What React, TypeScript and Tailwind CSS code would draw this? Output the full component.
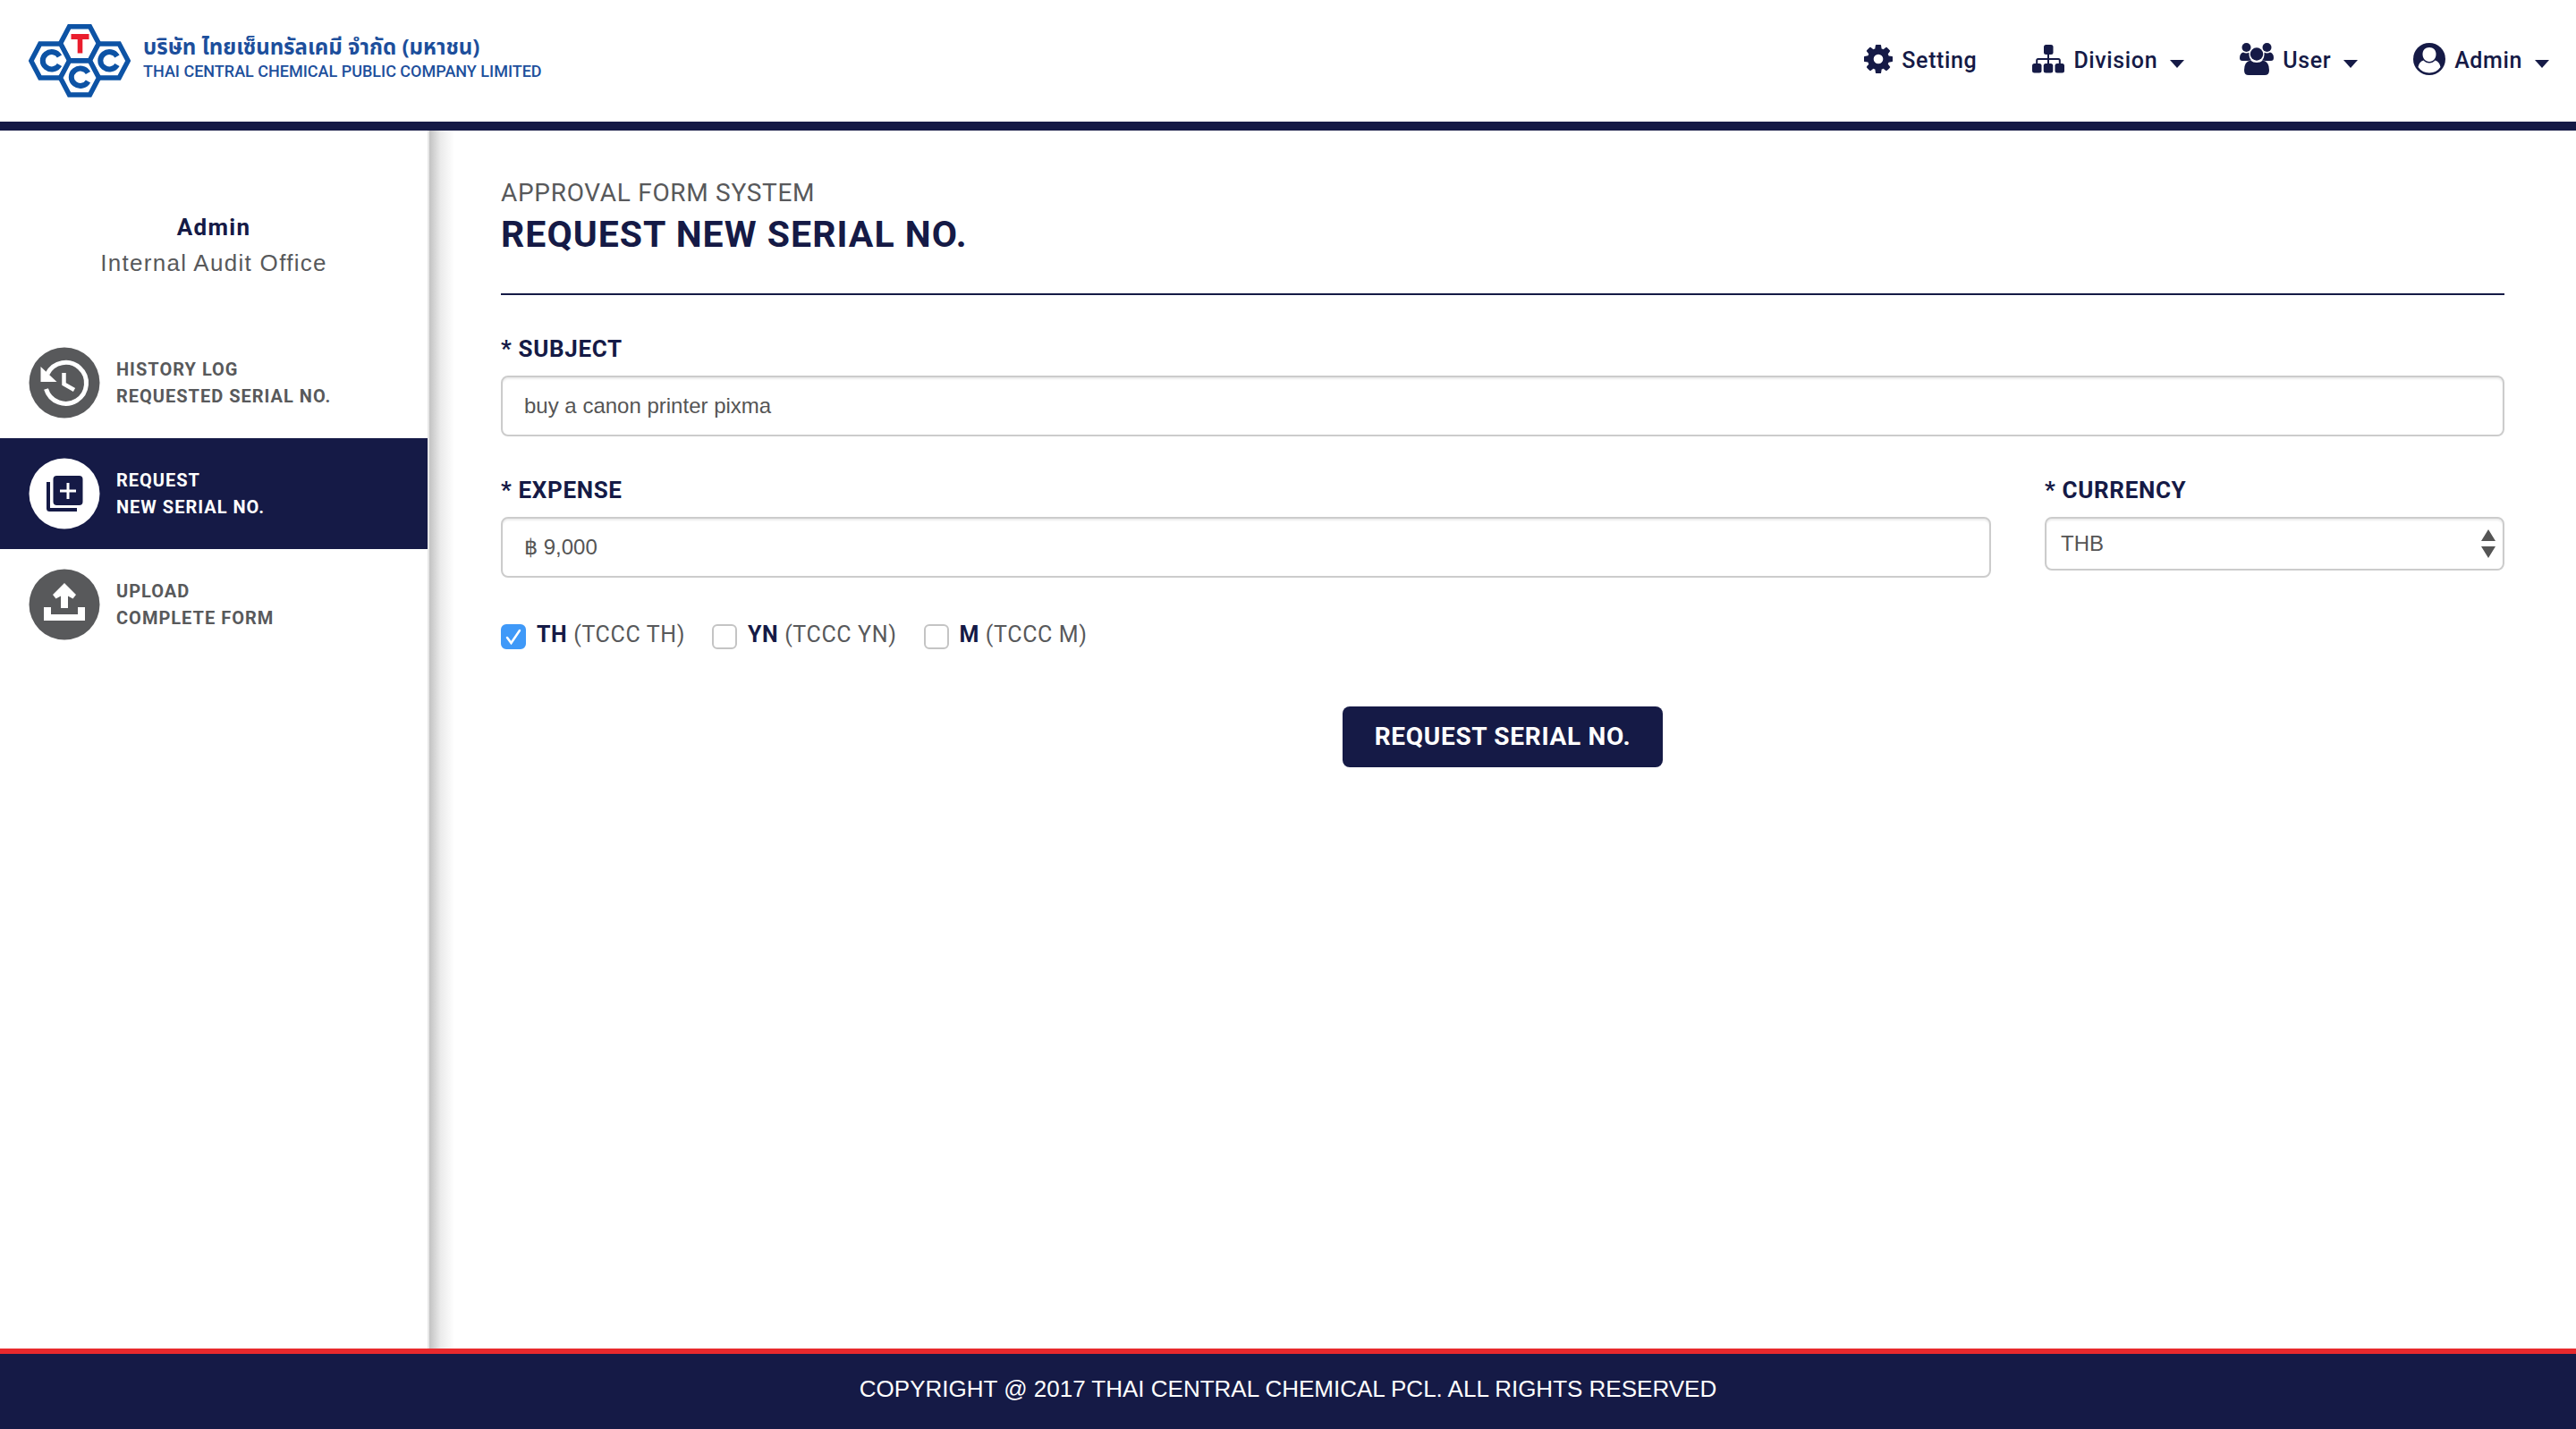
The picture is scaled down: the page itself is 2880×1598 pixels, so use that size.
import React from "react";

const NAVY = "#151a46";

function Caret() {
  return (
    <svg viewBox="0 0 16 10" className="mt-2 ml-1 h-[10px] w-4" fill="currentColor" aria-hidden="true">
      <path d="M0 0h16L8 9z" />
    </svg>
  );
}

function CogIcon() {
  return (
    <svg viewBox="0 0 1536 1536" className="mb-1 h-8 w-8" fill="currentColor" aria-hidden="true">
      <path d="M1024 768q0-106-75-181t-181-75-181 75-75 181 75 181 181 75 181-75 75-181zm512-109v222q0 12-8 23t-20 13l-185 28q-19 54-39 91 35 50 107 138 10 12 10 25t-9 23q-27 37-99 108t-94 71q-12 0-26-9l-138-108q-44 23-91 38-16 136-29 186-7 28-36 28H657q-14 0-24.500-8.500T621 1506l-28-184q-49-16-90-37l-141 107q-10 9-25 9-14 0-25-11-126-114-165-168-7-10-7-23 0-12 8-23 15-21 51-66.500t54-70.500q-27-50-41-99L29 913q-13-2-21-12.500T0 877V655q0-12 8-23t19-13l186-28q14-46 39-92-40-57-107-138-10-12-10-24 0-10 9-23 26-36 98.500-107.500T337 135q13 0 26 10l138 107q44-23 91-38 16-136 29-186 7-28 36-28h222q14 0 24.500 8.500T915 30l28 184q49 16 90 37l142-107q9-9 24-9 13 0 25 10 129 119 165 170 7 8 7 22 0 12-8 23-15 21-51 66.500t-54 70.500q26 50 41 98l183 28q13 2 21 12.500t8 23.500z" />
    </svg>
  );
}

function SitemapIcon() {
  return (
    <svg viewBox="0 0 36 32" className="mb-1 h-8 w-9" fill="currentColor" aria-hidden="true">
      <rect x="13" y="0" width="10.500" height="11" rx="2.500" />
      <rect x="0" y="21" width="10.500" height="10.500" rx="2.500" />
      <rect x="12.750" y="21" width="10.500" height="10.500" rx="2.500" />
      <rect x="25.500" y="21" width="10.500" height="10.500" rx="2.500" />
      <path d="M5.200 22v-4.500q0-1.500 1.500-1.500h22.600q1.500 0 1.500 1.500v4.500M18 10v12" fill="none" stroke="currentColor" strokeWidth="2" />
    </svg>
  );
}

function UsersIcon() {
  return (
    <svg viewBox="0 0 38 36" className="mb-1 h-9 w-[38px]" fill="currentColor" aria-hidden="true">
      <circle cx="7.500" cy="5" r="5" />
      <circle cx="30.500" cy="5" r="5" />
      <path d="M4 10.500q1.500 1 3.500 1 1.700 0 3-.7Q10 16 13 19.500q-2.500 0-4 .5H3q-3 0-3-3 0-5.500 4-6.500zM34 10.500q-1.500 1-3.500 1-1.700 0-3-.7Q28 16 25 19.500q2.500 0 4 .5h6q3 0 3-3 0-5.500-4-6.500z" />
      <circle cx="19" cy="12.500" r="7.200" />
      <path d="M12 19.500q3 2.500 7 2.500t7-2.500q7 1.500 7 11 0 5.500-5 5.500H10q-5 0-5-5.500 0-9.500 7-11z" />
    </svg>
  );
}

function UserCircleIcon() {
  return (
    <svg viewBox="0 0 36 36" className="mb-1 h-9 w-9" aria-hidden="true">
      <circle cx="18" cy="18" r="18" fill="currentColor" />
      <path d="M18 21c-4.500 0-7.500-4-7.500-8.500S13.500 5 18 5s7.500 3 7.500 7.500S22.500 21 18 21z" fill="#fff" />
      <path d="M11.500 19.500Q14 22.500 18 22.500t6.500-3q5 1.500 6 7.500Q26 33.500 18 33.500T5.500 27q1-6 6-7.500z" fill="#fff" />
    </svg>
  );
}

function Logo() {
  const hex = "M-11.500-19h23L21.500 0 11.500 19h-23L-21.500 0z";
  return (
    <svg viewBox="0 0 114 82" className="h-[82px] w-[114px] shrink-0" aria-label="TCCC" role="img">
      <g fill="#fff" stroke="#0d53a5" strokeWidth="5.500">
        <path d={hex} transform="translate(57 21.800)" />
        <path d={hex} transform="translate(24.300 41)" />
        <path d={hex} transform="translate(89.700 41)" />
        <path d={hex} transform="translate(57 60)" />
      </g>
      <path d="M47.500 11h20v6h-7.200v15.500h-5.600V17h-7.200z" fill="#ea1d2d" />
      <g fill="none" stroke="#0d53a5" strokeWidth="6">
        <path d="M34.500 36a10 9.700 0 1 0 0 9.500" />
        <path d="M99 36a10 9.700 0 1 0 0 9.500" />
        <path d="M66.500 54.500a10 9.700 0 1 0 0 9.500" />
      </g>
    </svg>
  );
}

function HistoryIcon() {
  return (
    <svg viewBox="0 0 80 80" className="h-20 w-20 shrink-0" aria-hidden="true">
      <circle cx="40" cy="40" r="39.500" fill="#58595b" />
      <path d="M21 30A23 23 0 1 1 19.500 47" fill="none" stroke="#fff" strokeWidth="5" />
      <path d="M13.500 22v17h18z" fill="#fff" />
      <path d="M39.500 29v12.500l11.500 6.500" fill="none" stroke="#fff" strokeWidth="4.500" />
    </svg>
  );
}

function AddIcon() {
  return (
    <svg viewBox="0 0 80 80" className="h-20 w-20 shrink-0" aria-hidden="true">
      <circle cx="40" cy="40" r="39.500" fill="#fff" />
      <rect x="27.500" y="20" width="33" height="33" rx="4" fill={NAVY} />
      <path d="M22 27v29.500q0 1.500 1.500 1.500H54" fill="none" stroke={NAVY} strokeWidth="4" />
      <path d="M44 28v18M35 37h18" stroke="#fff" strokeWidth="3" />
    </svg>
  );
}

function UploadIcon() {
  return (
    <svg viewBox="0 0 80 80" className="h-20 w-20 shrink-0" aria-hidden="true">
      <circle cx="40" cy="40" r="39.500" fill="#58595b" />
      <path d="M40 16l13 13-3.500 4.500-5.500-3V44h-8V30.500l-5.500 3L27 29z" fill="#fff" />
      <path d="M17 43h8v8h30v-8h8v15H17z" fill="#fff" />
    </svg>
  );
}

const menu = [
  { lines: ["HISTORY LOG", "REQUESTED SERIAL NO."], icon: <HistoryIcon />, active: false },
  { lines: ["REQUEST", "NEW SERIAL NO."], icon: <AddIcon />, active: true },
  { lines: ["UPLOAD", "COMPLETE FORM"], icon: <UploadIcon />, active: false },
];

const companies = [
  { id: "th", code: "TH", name: "(TCCC TH)", checked: true },
  { id: "yn", code: "YN", name: "(TCCC YN)", checked: false },
  { id: "m", code: "M", name: "(TCCC M)", checked: false },
];

const labelClass = "block text-[26px] leading-8 font-bold tracking-wide text-[#151a46]";
const fieldClass =
  "w-full rounded-lg border-2 border-[#ccc] bg-white font-['Liberation_Sans'] text-2xl text-[#555] shadow-[inset_0_2px_2px_rgba(0,0,0,0.075)]";

export default function App() {
  return (
    <div className="flex min-h-screen flex-col bg-white font-['Roboto','Liberation_Sans',sans-serif] text-[#58595b]">
      <header className="flex h-[146px] items-center justify-between border-b-10 border-[#151a46] pr-[30px] pl-8">
        <a href="#" className="flex items-center gap-[14px] text-[#1d4f9c]">
          <Logo />
          <span className="flex flex-col pb-1">
            <span className="font-['Noto_Sans_Thai','Noto_Sans','Liberation_Sans',sans-serif] text-2xl leading-7 font-bold">
              บริษัท ไทยเซ็นทรัลเคมี จำกัด (มหาชน)
            </span>
            <span className="text-lg leading-6 font-medium">THAI CENTRAL CHEMICAL PUBLIC COMPANY LIMITED</span>
          </span>
        </a>
        <nav className="flex items-center gap-[62px] text-[25px] leading-8 font-medium tracking-wide text-[#151a46]">
          <a href="#" className="flex items-center gap-[10px]"><CogIcon />Setting</a>
          <button type="button" className="flex items-center gap-[10px]"><SitemapIcon />Division<Caret /></button>
          <button type="button" className="flex items-center gap-[10px]"><UsersIcon />User<Caret /></button>
          <button type="button" className="flex items-center gap-[10px]"><UserCircleIcon />Admin<Caret /></button>
        </nav>
      </header>

      <div className="flex flex-1">
        <aside className="w-[480px] shrink-0 border-r-2 border-[#e7e7e7]">
          <div className="pt-[88px] pb-[52px] text-center">
            <p className="text-[26px] leading-10 font-bold tracking-wider text-[#151a46]">Admin</p>
            <p className="font-['Liberation_Sans'] text-[26px] leading-10 tracking-wider">Internal Audit Office</p>
          </div>
          <ul>
            {menu.map((item) => (
              <li key={item.lines[0]}>
                <a
                  href="#"
                  className={
                    item.active
                      ? "flex h-[124px] items-center gap-[18px] bg-[#151a46] pl-8 text-white"
                      : "flex h-[124px] items-center gap-[18px] pl-8"
                  }
                >
                  {item.icon}
                  <span className="text-xl leading-[30px] font-bold tracking-wider">
                    {item.lines[0]}
                    <br />
                    {item.lines[1]}
                  </span>
                </a>
              </li>
            ))}
          </ul>
        </aside>
        <div className="w-7 shrink-0 bg-linear-to-r from-[#c2c2c2] via-[#ebebeb] via-45% to-white" />

        <main className="min-w-0 flex-1 pt-[52px] pr-20 pl-[52px]">
          <p className="text-[28px] leading-9 tracking-wide">APPROVAL FORM SYSTEM</p>
          <h1 className="text-[41px] leading-[56px] font-bold tracking-wide text-[#151a46]">REQUEST NEW SERIAL NO.</h1>
          <hr className="mt-[38px] border-t-2 border-[#151a46]" />

          <form className="pt-11">
            <label htmlFor="subject" className={labelClass}>* SUBJECT</label>
            <input id="subject" defaultValue="buy a canon printer pixma" className={`${fieldClass} mt-[14px] h-[68px] px-6`} />

            <div className="mt-11 grid grid-cols-[1fr_514px] gap-15">
              <div>
                <label htmlFor="expense" className={labelClass}>* EXPENSE</label>
                <input id="expense" defaultValue="฿ 9,000" className={`${fieldClass} mt-[14px] h-[68px] px-6`} />
              </div>
              <div>
                <label htmlFor="currency" className={labelClass}>* CURRENCY</label>
                <div className="relative mt-[14px]">
                  <select id="currency" className={`${fieldClass} h-[60px] appearance-none px-4`}>
                    <option>THB</option>
                  </select>
                  <svg viewBox="0 0 16 32" className="pointer-events-none absolute top-[14px] right-[10px] h-8 w-4" fill="#555" aria-hidden="true">
                    <path d="M0 13L8 0l8 13zM0 19h16L8 32z" />
                  </svg>
                </div>
              </div>
            </div>

            <div className="mt-12 flex items-center gap-[30px]">
              {companies.map((c) => (
                <div key={c.id} className="flex items-center gap-3">
                  <span className="relative mt-1 flex">
                    <input
                      id={c.id}
                      type="checkbox"
                      defaultChecked={c.checked}
                      className="peer h-7 w-7 appearance-none rounded-md border-2 border-[#c4c4c4] bg-white checked:border-[#3f99f8] checked:bg-[#3f99f8]"
                    />
                    <svg viewBox="0 0 28 28" className="pointer-events-none absolute inset-0 hidden h-7 w-7 peer-checked:block" fill="none" stroke="#fff" strokeWidth="2.500" strokeLinecap="round" aria-hidden="true">
                      <path d="M7 15l4.500 6L21 7" />
                    </svg>
                  </span>
                  <label htmlFor={c.id} className="text-[25px] leading-8 tracking-wide">
                    <b className="text-[#151a46]">{c.code}</b> {c.name}
                  </label>
                </div>
              ))}
            </div>

            <div className="mt-16 flex justify-center">
              <button type="submit" className="h-[68px] rounded-lg bg-[#151a46] px-9 text-[28px] font-bold tracking-wide text-white">
                REQUEST SERIAL NO.
              </button>
            </div>
          </form>
        </main>
      </div>

      <footer className="flex h-[90px] items-center justify-center border-t-6 border-[#e8292d] bg-[#151a46] pb-1.5 font-['Liberation_Sans'] text-[26px] text-white">
        COPYRIGHT @ 2017 THAI CENTRAL CHEMICAL PCL. ALL RIGHTS RESERVED
      </footer>
    </div>
  );
}
